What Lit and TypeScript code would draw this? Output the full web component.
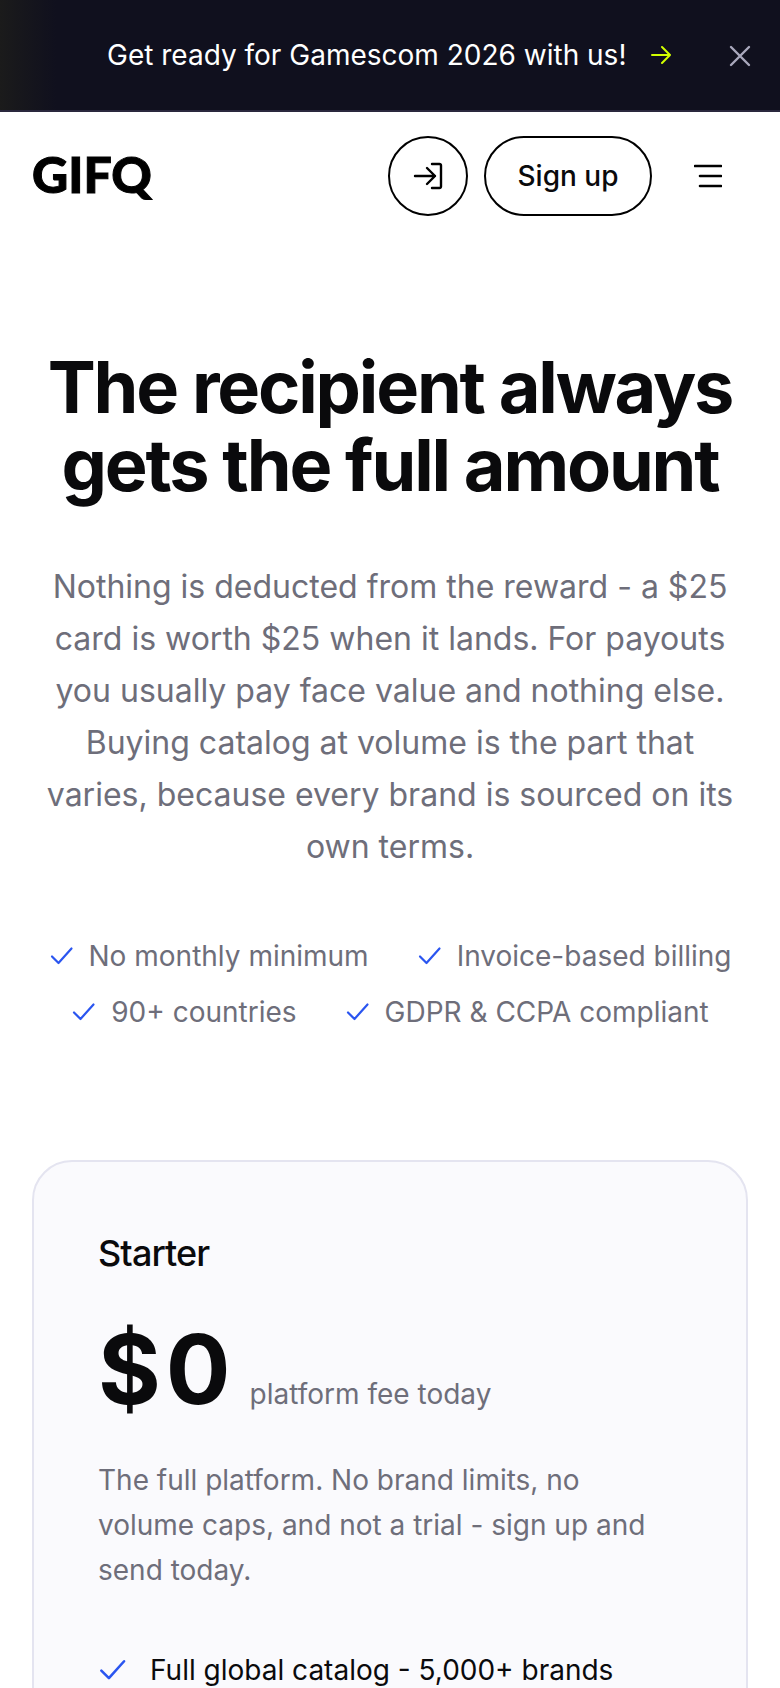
import { LitElement, html, css, svg } from "lit";
import { customElement } from "lit/decorators.js";

const check = svg`<path d="M2 12.5 8.5 19 21.5 4.5" fill="none" stroke="currentColor" stroke-width="2.2" stroke-linecap="round" stroke-linejoin="round"/>`;

const PERKS = [
  ["No monthly minimum", "Invoice-based billing"],
  ["90+ countries", "GDPR & CCPA compliant"],
];

@customElement("app-root")
export class AppRoot extends LitElement {
  static styles = css`
    :host {
      display: block;
      height: 1688px;
      overflow: hidden;
      background: #fff;
      color: #0a0a0c;
      font-family: Inter, "Liberation Sans", sans-serif;
    }

    .banner {
      position: relative;
      height: 110px;
      box-sizing: content-box;
      border-bottom: 2px solid #2a283d;
      background: linear-gradient(90deg, #1b1b1b 0, #10101e 56px);
      display: flex;
      align-items: center;
      padding-left: 107px;
      color: #fff;
      font-size: 28px;
    }

    .banner .arrow {
      margin-left: 25px;
      color: #d2ff00;
      width: 20px;
      height: 20px;
    }

    .banner .close {
      position: absolute;
      left: 729px;
      top: 45px;
      width: 22px;
      height: 22px;
      color: #a9a8bd;
    }

    .nav {
      height: 112px;
      padding: 24px 32px 0;
      display: flex;
      align-items: flex-start;
      box-sizing: border-box;
    }

    .logo {
      font-family: Lato, Inter, sans-serif;
      font-size: 50px;
      font-weight: 900;
      line-height: 76px;
      -webkit-text-stroke: 1px #000;
      color: #000;
      flex: 1;
    }

    .round,
    .pill {
      box-sizing: border-box;
      height: 80px;
      border: 2px solid #000;
      border-radius: 40px;
      display: flex;
      align-items: center;
      justify-content: center;
    }

    .round {
      width: 80px;
    }

    .pill {
      width: 168px;
      margin-left: 16px;
      font-size: 28px;
      font-weight: 500;
    }

    .menu {
      width: 28px;
      height: 24px;
      margin: 28px 26px 0 42px;
    }

    .hero {
      padding: 124px 32px 0;
      text-align: center;
    }

    h1 {
      margin: 0;
      font-size: 72px;
      line-height: 78px;
      font-weight: 700;
      letter-spacing: -0.03em;
    }

    .lead {
      margin: 57px 0 0;
      font-size: 32px;
      line-height: 52px;
      color: #6e6e7a;
    }

    .perks {
      margin-top: 63px;
      padding-left: 1px;
      display: flex;
      flex-direction: column;
      gap: 16px;
    }

    .perk-row {
      display: flex;
      justify-content: center;
      gap: 49px;
    }

    .perk {
      display: flex;
      align-items: center;
      gap: 15px;
      font-size: 28px;
      line-height: 40px;
      color: #6e6e7a;
    }

    .perk svg,
    .feature svg {
      color: #2a55f0;
      flex: none;
    }

    .card {
      margin: 128px 32px 0;
      padding: 69px 64px 120px;
      border: 2px solid #e4e4f0;
      border-radius: 40px;
      background: #fafafd;
    }

    h2 {
      margin: 0;
      font-size: 36px;
      line-height: 44px;
      font-weight: 500;
      letter-spacing: -0.025em;
    }

    .price {
      margin-top: 39px;
      display: flex;
      align-items: baseline;
      gap: 14px;
    }

    .amount {
      font-size: 96px;
      line-height: 110px;
      font-weight: 700;
      letter-spacing: 5px;
    }

    .unit {
      font-size: 28px;
      color: #6e6e7a;
    }

    .desc {
      margin: 34px 0 0;
      font-size: 28px;
      line-height: 45px;
      color: #6e6e7a;
    }

    .feature {
      margin-top: 57px;
      display: flex;
      align-items: center;
      gap: 23px;
      padding-left: 1px;
      font-size: 28px;
      line-height: 40px;
    }
  `;

  render() {
    return html`
      <div class="banner">
        <span>Get ready for Gamescom 2026 with us!</span>
        <svg class="arrow" viewBox="0 0 20 20" fill="none" stroke="currentColor" stroke-width="2" stroke-linecap="round" stroke-linejoin="round">
          <path d="M1 10h18M11 2l8 8-8 8" />
        </svg>
        <svg class="close" viewBox="0 0 22 22" fill="none" stroke="currentColor" stroke-width="2.4" stroke-linecap="round">
          <path d="M2 2l18 18M20 2 2 20" />
        </svg>
      </div>
      <div class="nav">
        <div class="logo">GIFQ</div>
        <div class="round">
          <svg width="30" height="28" viewBox="0 0 30 28" fill="none" stroke="#000" stroke-width="2.4" stroke-linecap="round" stroke-linejoin="round">
            <path d="M2 14h20M14 6l8 8-8 8M19 2h7.5a1.5 1.5 0 0 1 1.5 1.5v21a1.5 1.5 0 0 1-1.5 1.5H19" />
          </svg>
        </div>
        <div class="pill">Sign up</div>
        <svg class="menu" viewBox="0 0 28 24" fill="none" stroke="#000" stroke-width="2.6" stroke-linecap="round">
          <path d="M1 2h26M6 12h21M6 22h21" />
        </svg>
      </div>
      <div class="hero">
        <h1>The recipient always gets the full amount</h1>
        <p class="lead">
          Nothing is deducted from the reward - a $25 card is worth $25 when it
          lands. For payouts you usually pay face value and nothing else. Buying
          catalog at volume is the part that varies, because every brand is
          sourced on its own terms.
        </p>
        <div class="perks">
          ${PERKS.map(
            (row) => html`
              <div class="perk-row">
                ${row.map(
                  (label) => html`
                    <div class="perk">
                      <svg width="24" height="24" viewBox="0 0 24 24">${check}</svg>
                      <span>${label}</span>
                    </div>
                  `
                )}
              </div>
            `
          )}
        </div>
      </div>
      <div class="card">
        <h2>Starter</h2>
        <div class="price">
          <span class="amount">$0</span>
          <span class="unit">platform fee today</span>
        </div>
        <p class="desc">
          The full platform. No brand limits, no volume caps, and not a trial -
          sign up and send today.
        </p>
        <div class="feature">
          <svg width="28" height="28" viewBox="0 0 24 24">${check}</svg>
          <span>Full global catalog - 5,000+ brands</span>
        </div>
      </div>
    `;
  }
}
